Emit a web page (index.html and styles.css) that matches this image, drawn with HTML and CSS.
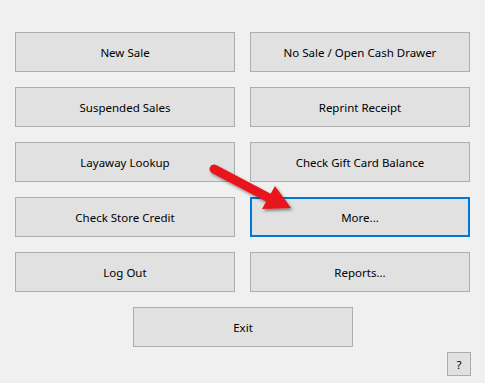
FILE: index.html
```html
<!DOCTYPE html>
<html lang="en">
<head>
    <meta charset="UTF-8">
    <title>Main Menu</title>
    <link rel="stylesheet" href="styles.css">
</head>
<body>
    <div class="menu">
        <div class="grid">
            <button class="btn">New Sale</button>
            <button class="btn">No Sale / Open Cash Drawer</button>
            <button class="btn">Suspended Sales</button>
            <button class="btn">Reprint Receipt</button>
            <button class="btn">Layaway Lookup</button>
            <button class="btn">Check Gift Card Balance</button>
            <button class="btn">Check Store Credit</button>
            <button class="btn focused">More...</button>
            <button class="btn">Log Out</button>
            <button class="btn">Reports...</button>
        </div>
        <div class="exit-row">
            <button class="btn">Exit</button>
        </div>
        <div class="help-row">
            <button class="help">?</button>
        </div>
    </div>

    <!-- red pointer arrow drawn over the buttons -->
    <svg class="arrow" width="485" height="383" viewBox="0 0 485 383">
        <defs>
            <filter id="shadow" x="-20%" y="-20%" width="150%" height="150%">
                <feDropShadow dx="1.5" dy="2" stdDeviation="1.5" flood-color="#000" flood-opacity="0.45"/>
            </filter>
        </defs>
        <g filter="url(#shadow)">
            <line x1="214" y1="169" x2="271" y2="199" stroke="#e8161b" stroke-width="9" stroke-linecap="round"/>
            <polygon points="291,208 262,209 275,186" fill="#e8161b"/>
        </g>
    </svg>
</body>
</html>
```

FILE: styles.css
```css
body {
    margin: 0;
    padding: 0;
    background-color: #f0f0f0;
    font-family: "Noto Sans", "Open Sans", sans-serif;
}

.menu {
    padding: 32px 15px 0 15px;
    width: 455px;
}

.grid {
    display: grid;
    grid-template-columns: 220px 220px;
    gap: 15px;
}

.btn {
    box-sizing: border-box;
    height: 40px;
    width: 220px;
    background-color: #e1e1e1;
    border: 1px solid #adadad;
    color: #000;
    font-family: inherit;
    font-size: 11.5px;
    padding: 0;
    margin: 0;
}

.btn.focused {
    border: 2px solid #0078d7;
}

.exit-row {
    display: flex;
    justify-content: center;
    margin-top: 15px;
    padding-left: 1px;
}

.help-row {
    display: flex;
    justify-content: flex-end;
    margin-top: 5px;
    margin-right: -1px;
}

.help {
    box-sizing: border-box;
    width: 24px;
    height: 24px;
    background-color: #e1e1e1;
    border: 1px solid #adadad;
    font-family: inherit;
    font-size: 11.5px;
    padding: 0;
    margin: 0;
}

.arrow {
    position: absolute;
    left: 0;
    top: 0;
    pointer-events: none;
}
```
